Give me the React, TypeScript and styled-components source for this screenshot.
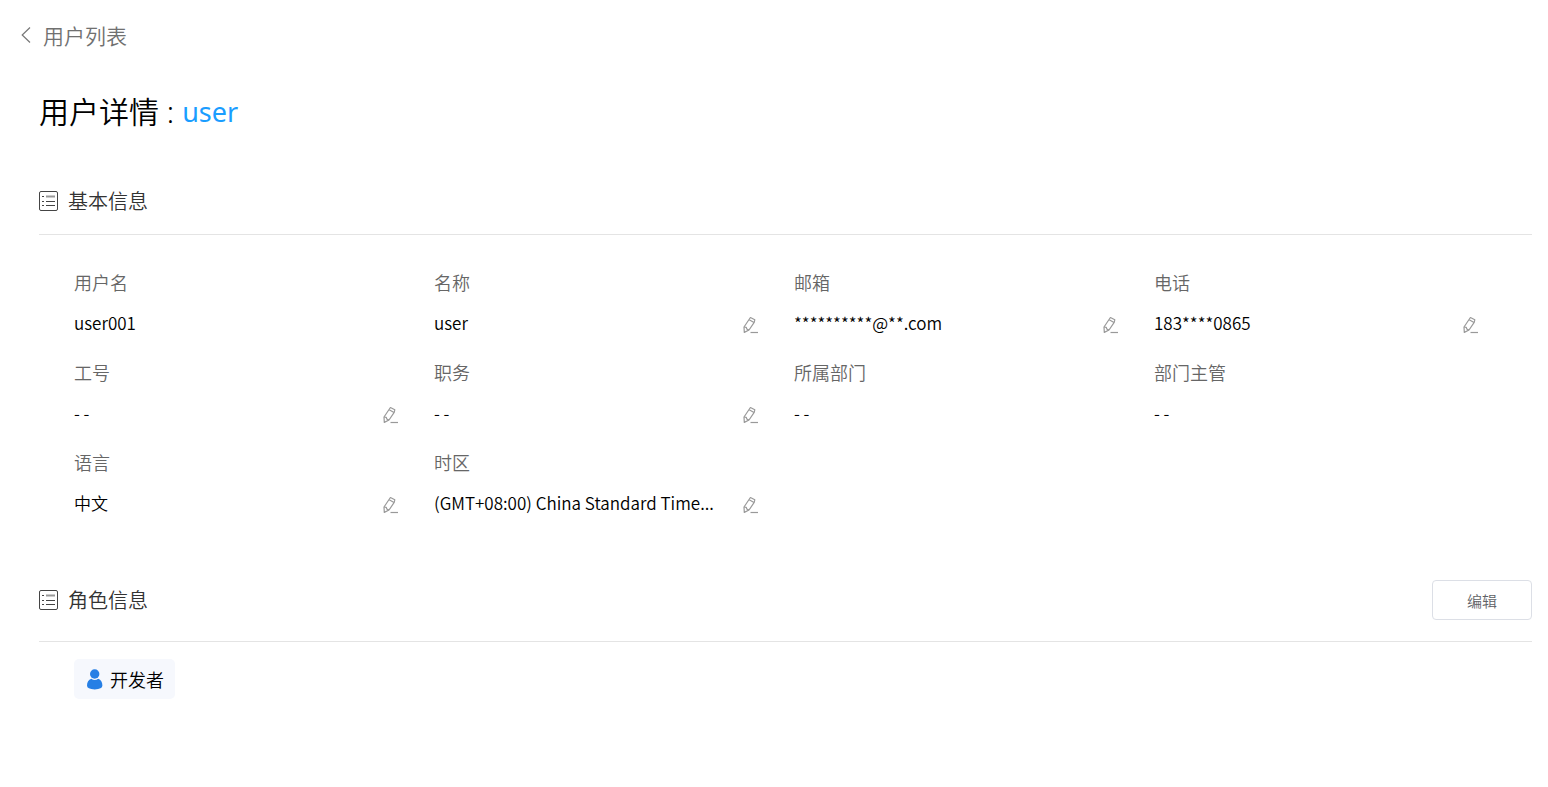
import React from 'react';
import styled, { createGlobalStyle } from 'styled-components';

const GlobalStyle = createGlobalStyle`
  *, *::before, *::after { box-sizing: border-box; }
  body {
    margin: 0;
    background: #fff;
    color: #000;
    font-family: 'Noto Sans CJK SC', 'Noto Sans', sans-serif;
    font-weight: 350;
  }
  button { font: inherit; cursor: pointer; }
  h1, h2, dl, dd { margin: 0; font-weight: inherit; }
`;

const Page = styled.main`
  padding: 0 16px 88px 20px;
`;

const BackLink = styled.a`
  display: inline-flex;
  align-items: center;
  gap: 11px;
  height: 70px;
  font-size: 21px;
  line-height: 32px;
  color: #707070;
  text-decoration: none;
`;

const Content = styled.div`
  padding-left: 19px;
`;

const Title = styled.h1`
  display: flex;
  align-items: center;
  gap: 8px;
  font-family: 'Noto Sans', 'Noto Sans CJK SC', sans-serif;
  font-size: 30px;
  line-height: 84px;
`;

const Accent = styled.span`
  font-size: 27px;
  font-weight: 400;
  color: #1a9dff;
`;

const SectionHeader = styled.header<{ $top: number; $bottom: number }>`
  display: flex;
  align-items: center;
  justify-content: space-between;
  margin-top: ${({ $top }) => $top}px;
  padding-bottom: ${({ $bottom }) => $bottom}px;
  border-bottom: 1px solid #e4e4e4;
`;

const SectionTitle = styled.h2`
  display: flex;
  align-items: center;
  gap: 9px;
  font-size: 20px;
  line-height: 40px;
  color: #333;
`;

const Fields = styled.dl`
  display: grid;
  grid-template-columns: repeat(4, minmax(0, 1fr));
  row-gap: 9px;
  padding: 27px 18px 0 35px;
`;

const Label = styled.dt`
  margin-bottom: 1px;
  font-size: 18px;
  line-height: 40px;
  color: #666;
`;

const Value = styled.dd`
  display: flex;
  align-items: center;
  justify-content: space-between;
  padding-right: 35px;
  font-size: 17px;
  line-height: 40px;
  white-space: nowrap;
`;

const IconButton = styled.button`
  display: flex;
  padding: 3px 0 0;
  border: 0;
  background: none;
  color: #999;
`;

const EditButton = styled.button`
  width: 100px;
  height: 40px;
  border: 1px solid #dcdfe6;
  border-radius: 4px;
  background: #fff;
  color: #606266;
  && { font-size: 15px; }
`;

const Roles = styled.div`
  display: flex;
  padding: 17px 18px 0 35px;
`;

const RoleTag = styled.span`
  display: flex;
  align-items: center;
  gap: 7px;
  height: 40px;
  padding: 0 11px 0 13px;
  border-radius: 5px;
  background: #f6f8fd;
  font-size: 18px;
`;

const ChevronIcon = () => (
  <svg width="12" height="18" viewBox="0 0 12 18" fill="none" stroke="#777" strokeWidth="1.2" aria-hidden="true">
    <path d="M10 1.5 2.2 9l7.8 7.5" />
  </svg>
);

const ListIcon = () => (
  <svg width="20" height="20" viewBox="0 0 20 20" fill="none" stroke="#444" aria-hidden="true">
    <rect x=".5" y=".5" width="18" height="19" rx="1.5" />
    <path d="M3 5.5h2M3 10.5h2M3 14.5h2M7 10.5h9M7 14.5h9" />
    <path d="M7 5.5h9" strokeWidth="2" stroke="#999" />
  </svg>
);

const PencilIcon = () => (
  <svg width="16" height="18" viewBox="0 0 16 18" fill="none" stroke="currentColor" strokeWidth="1.2" strokeLinejoin="round" aria-hidden="true">
    <path d="M7.4 1.5 11.8 3.8 11.2 6.4 6 14 1.3 16.4 1 11Z" />
    <path d="m6.2 3.8 4.8 2.8M1 11l2.2.3.7 1.8 2.1.9" />
    <path d="M7.5 16.5H15" />
  </svg>
);

const UserIcon = () => (
  <svg width="16" height="21" viewBox="0 0 16 21" fill="#267fe5" aria-hidden="true">
    <circle cx="7.7" cy="5" r="4.7" />
    <path d="M4.3 9.8Q7.7 12.3 11.2 9.8C14 11 15.4 13.3 15.4 16.6Q15.4 20.4 7.7 20.4T0 16.6C0 13.3 1.5 11 4.3 9.8Z" />
  </svg>
);

type Field = { label: string; value: string; editable?: boolean };

const fields: Field[] = [
  { label: '用户名', value: 'user001' },
  { label: '名称', value: 'user', editable: true },
  { label: '邮箱', value: '**********@**.com', editable: true },
  { label: '电话', value: '183****0865', editable: true },
  { label: '工号', value: '- -', editable: true },
  { label: '职务', value: '- -', editable: true },
  { label: '所属部门', value: '- -' },
  { label: '部门主管', value: '- -' },
  { label: '语言', value: '中文', editable: true },
  { label: '时区', value: '(GMT+08:00) China Standard Time...', editable: true },
];

export default function App() {
  return (
    <Page lang="zh-CN">
      <GlobalStyle />
      <BackLink href="#users">
        <ChevronIcon />
        用户列表
      </BackLink>
      <Content>
        <Title>
          <span>用户详情 :</span>
          <Accent>user</Accent>
        </Title>
        <section>
          <SectionHeader $top={27} $bottom={13}>
            <SectionTitle><ListIcon />基本信息</SectionTitle>
          </SectionHeader>
          <Fields>
            {fields.map(({ label, value, editable }) => (
              <div key={label}>
                <Label>{label}</Label>
                <Value>
                  <span>{value}</span>
                  {editable && (
                    <IconButton type="button" aria-label={`编辑${label}`}>
                      <PencilIcon />
                    </IconButton>
                  )}
                </Value>
              </div>
            ))}
          </Fields>
        </section>
        <section>
          <SectionHeader $top={57} $bottom={21}>
            <SectionTitle><ListIcon />角色信息</SectionTitle>
            <EditButton type="button">编辑</EditButton>
          </SectionHeader>
          <Roles>
            <RoleTag><UserIcon />开发者</RoleTag>
          </Roles>
        </section>
      </Content>
    </Page>
  );
}
